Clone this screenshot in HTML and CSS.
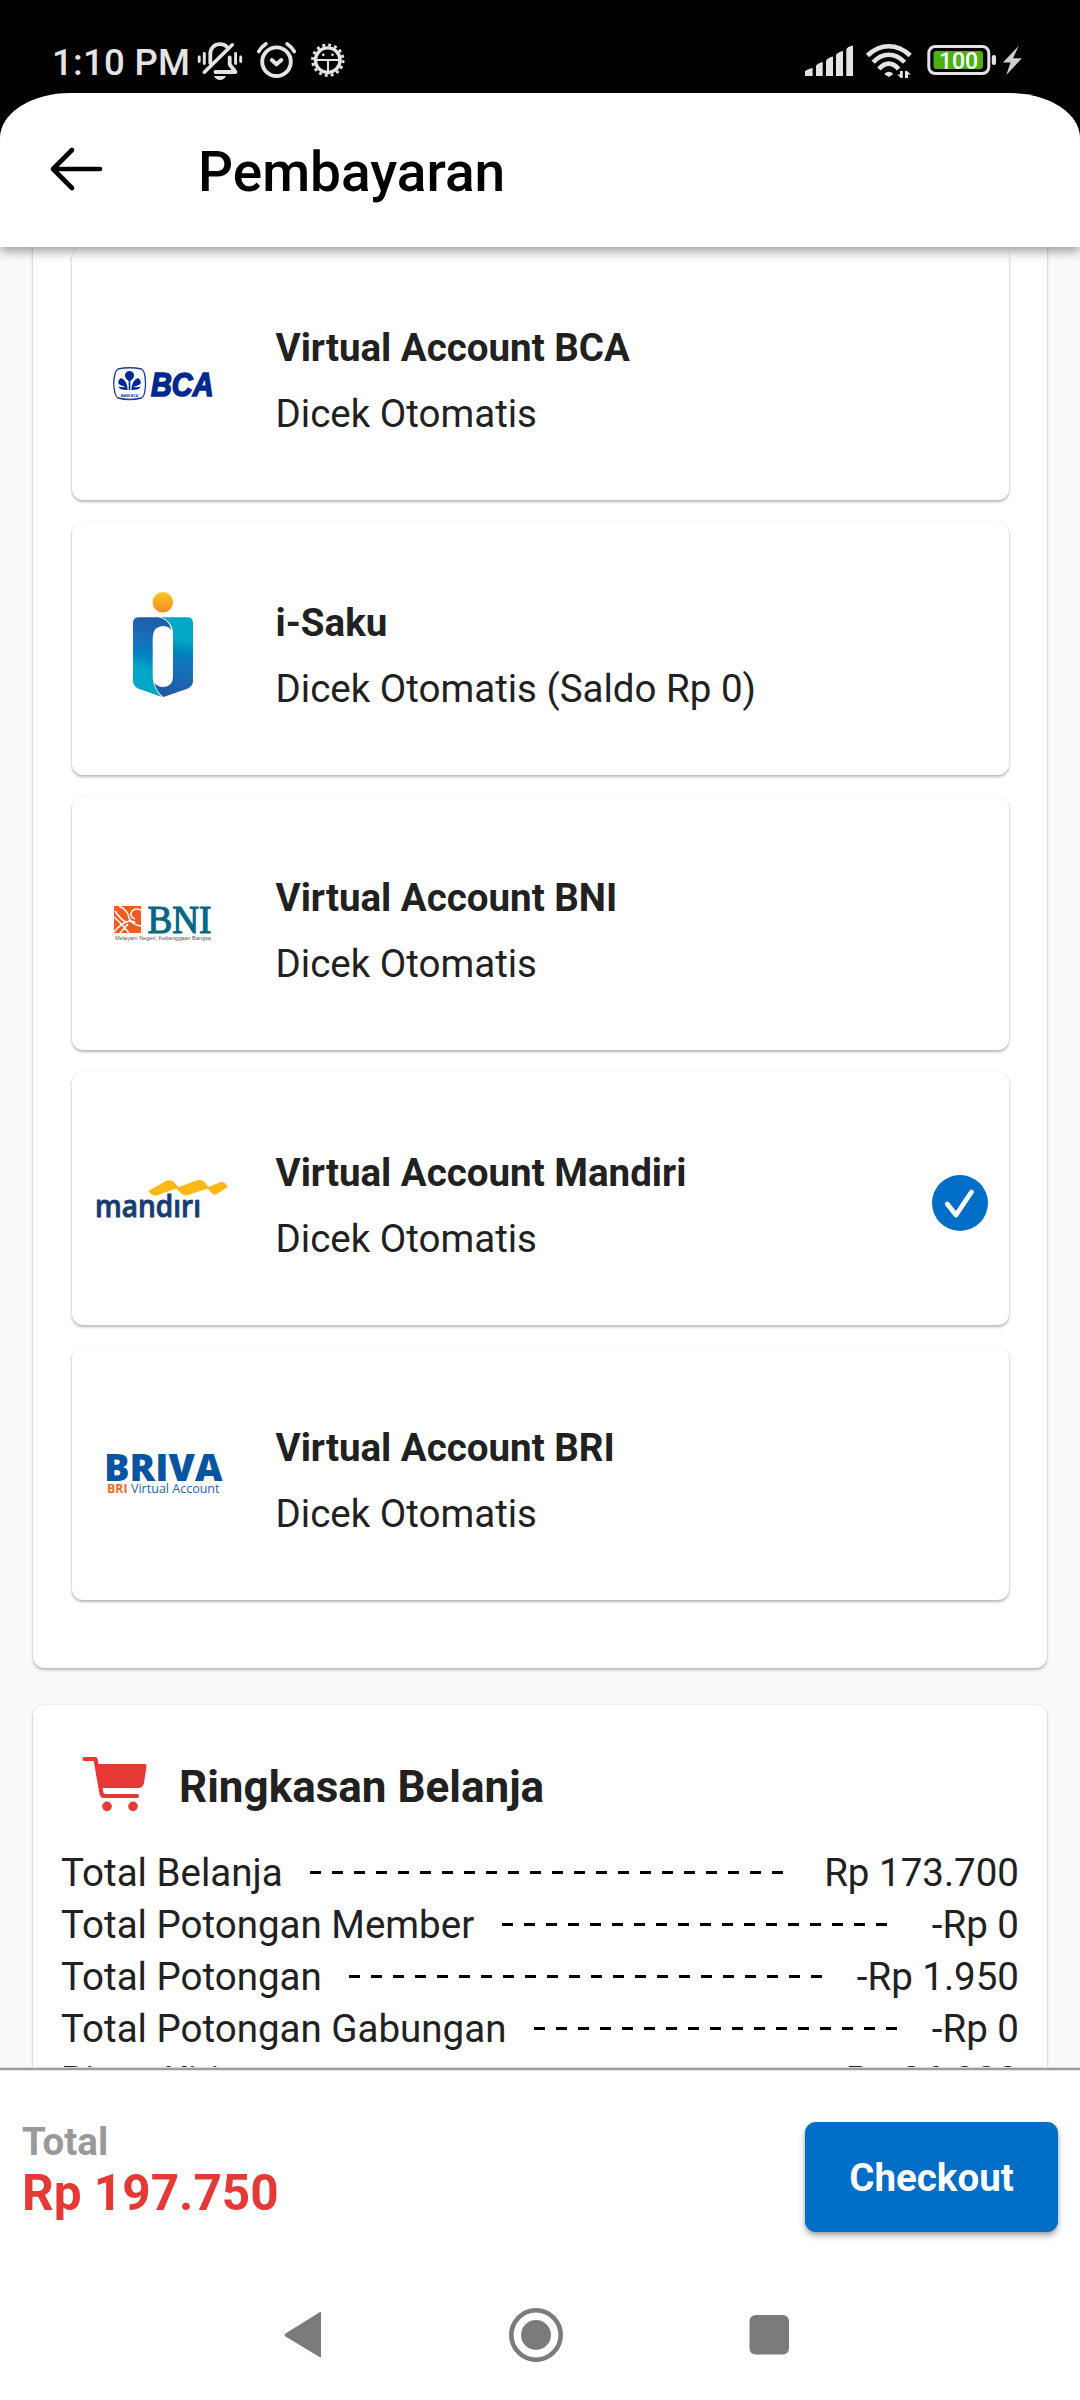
FILE: index.html
```html
<!DOCTYPE html>
<html lang="id">
<head>
<meta charset="utf-8">
<title>Pembayaran</title>
<link rel="stylesheet" href="styles.css">
</head>
<body>
<div class="status">
  <span class="time">1:10 PM</span>
  <svg class="status-left" viewBox="190 30 160 63" fill="none" stroke="#e4e4e4" stroke-linecap="round" stroke-linejoin="round">
    <g stroke-width="2.9">
      <path d="M199.2 57v4.5M204.3 53.5v10M235.6 53.5v10M240.7 57v4.5"/>
    </g>
    <path stroke-width="3.8" d="M210.3 63V54C210.3 48 214.5 44.2 220 44.2Q224.500 44.200 226.500 46.500M229.700 57.500V64.500L235.500 72H215.500"/>
    <path stroke-width="3.6" d="M232.300 44.800L204.300 72.200"/>
    <path fill="#e4e4e4" stroke="none" d="M214 76H226Q224 80 220 80Q216 80 214 76Z"/>
    <circle cx="276.500" cy="61.700" r="14.300" stroke-width="3.900"/>
    <path stroke-width="4" d="M271.800 60L276.500 64.300L281.300 60"/>
    <path stroke-width="3.600" d="M258.700 51.500Q261.500 47 266 43.800M287 43.800Q291.500 47 294.300 51.500"/>
    <circle cx="327.800" cy="60.200" r="12.300" stroke-width="3.400"/>
    <circle cx="327.800" cy="60.200" r="15.200" stroke-width="3" stroke-linecap="butt" stroke-dasharray="2.900 3.070"/>
    <path stroke-width="2" d="M316 60H340M328 60V73"/>
    <path stroke-width="2.500" d="M323.200 54.800h.1M332.400 54.800h.1"/>
  </svg>
  <svg class="status-right" viewBox="800 30 230 63" fill="#e4e4e4">
    <path d="M805 76V71.500Q806 69.500 812.600 68V76ZM816 76V66Q817 63.500 822.700 62V76ZM826 76V61Q827 58 833 56.500V76ZM836 76V55Q837 52.500 843 51V76ZM846.300 76V49.500Q847 46.500 853 45.500V76Z"/>
    <g fill="none" stroke="#e4e4e4" stroke-width="4.600">
      <path d="M867.500 55.500Q877 46.200 888.800 46.200T910.200 55.500"/>
      <path d="M873.200 62.300Q880 54.700 888.800 54.700T904.600 62.300"/>
      <path d="M879 69Q883.500 63.600 888.800 63.600T898.600 69"/>
    </g>
    <path d="M884.200 74Q888.800 69.500 893.400 74L888.800 77Z"/>
    <path d="M900 71H902.800V78H901L897.300 74.500H900ZM905 71H907L910.800 74.500H908V78H905Z"/>
    <rect x="928.800" y="46.500" width="60" height="27" rx="6.500" fill="none" stroke="#e4e4e4" stroke-width="3"/>
    <rect x="933.500" y="51" width="49.500" height="18" rx="3" fill="#4caf13"/>
    <rect x="991.800" y="55" width="4.200" height="10" rx="2"/>
    <path fill="#cfcfcf" d="M1018.700 46L1013 58.300H1021.900L1006.300 75L1010.500 62.500H1002.800Z"/>
    <text class="battery" x="939" y="69" textLength="39">100</text>
  </svg>
</div>
<header class="bar-wrap">
  <div class="appbar">
    <svg class="back" viewBox="0 0 56 50"><path d="M51 25H4M23 6L4 25L23 44"/></svg>
    <h1>Pembayaran</h1>
  </div>
</header>
<main>
  <section class="panel methods">
    <article class="method">
      <svg class="logo" viewBox="72 247 203 253">
        <path d="M118 369Q129.500 366.500 141.500 369Q144 371 144.500 374Q146.500 383.500 144.500 393Q144 396.500 141.500 398Q129.500 401 118 398Q115.500 396.500 115 393Q112.500 383.500 115 374Q115.500 371 118 369Z" fill="none" stroke="#1c3c9c" stroke-width="1.300"/>
        <g fill="#00298f">
          <path d="M128.700 390V381Q124.500 378 125 374.500Q126 371 129.500 371T134 374.500Q134.500 378 130.300 381V390Z"/>
          <path d="M127.700 390Q127 380 121 378Q117.500 380 118.500 384Q121.500 386 126 387Q121 387.500 118.500 386.500Q119 390 127.700 390ZM131.300 390Q132 380 138 378Q141.500 380 140.500 384Q137.500 386 133 387Q138 387.500 140.500 386.500Q140 390 131.300 390Z"/>
        </g>
        <text class="bca-tiny" x="121" y="397" textLength="17" lengthAdjust="spacingAndGlyphs">BANK BCA</text>
        <text class="bca" x="151" y="395.500" textLength="62.500" lengthAdjust="spacingAndGlyphs">BCA</text>
      </svg>
      <div class="info"><h2>Virtual Account BCA</h2><p>Dicek Otomatis</p></div>
    </article>
    <article class="method">
      <svg class="logo" viewBox="72 522 203 253">
        <defs>
          <linearGradient id="sun" x2="0" y2="1"><stop stop-color="#fdc623"/><stop offset="1" stop-color="#f68b1f"/></linearGradient>
          <linearGradient id="left" gradientUnits="userSpaceOnUse" x1="170" y1="618" x2="152" y2="694"><stop stop-color="#2059a6"/><stop offset=".4" stop-color="#1674bd"/><stop offset=".53" stop-color="#0080bf"/><stop offset=".7" stop-color="#00a7c6"/></linearGradient>
          <linearGradient id="right" gradientUnits="userSpaceOnUse" x1="183" y1="618" x2="168" y2="694"><stop offset=".28" stop-color="#00a7c6"/><stop offset=".45" stop-color="#0080bf"/><stop offset=".6" stop-color="#1674bd"/><stop offset="1" stop-color="#2059a6"/></linearGradient>
        </defs>
        <circle cx="162.800" cy="602.300" r="10.200" fill="url(#sun)"/>
        <path fill="url(#left)" d="M139 617.300H158Q169 619 171.500 630Q168 626 163 626Q153 626.500 152.700 637V678Q154 690 161.800 697L138 688.500Q133 686 133 681V623Q133 617.300 139 617.300Z"/>
        <path fill="url(#right)" d="M160.500 617.300H187Q193 617.300 193 623V681Q193 686 188 688.500L163.500 697Q156 691 154.500 683Q158 687 163 687Q172.800 686.500 173 677V631Q171 620 160.500 617.300Z"/>
      </svg>
      <div class="info"><h2>i-Saku</h2><p>Dicek Otomatis (Saldo Rp 0)</p></div>
    </article>
    <article class="method">
      <svg class="logo" viewBox="72 797 203 253">
        <rect x="114" y="906" width="27" height="27" fill="#f15a23"/>
        <svg x="114" y="906" width="27" height="27" viewBox="0 0 27 27">
          <path d="M0 11Q6 16 15 27M0 26Q7 17 15 15Q20 15 21 17M5 0Q14 4 15 12Q18 19 27 20M27 4Q20 1 17 7Q16 11 21 13M1 5Q7 14 12 16M14 18L6 27" fill="none" stroke="#fff" stroke-width="1.600"/>
        </svg>
        <text class="bni" x="147.500" y="932.700" textLength="64" lengthAdjust="spacingAndGlyphs">BNI</text>
        <text class="bni-tiny" x="115" y="940" textLength="96" lengthAdjust="spacingAndGlyphs">Melayani Negeri, Kebanggaan Bangsa</text>
      </svg>
      <div class="info"><h2>Virtual Account BNI</h2><p>Dicek Otomatis</p></div>
    </article>
    <article class="method">
      <svg class="logo" viewBox="72 1072 203 253">
        <text class="mandiri" x="95" y="1217.300" textLength="106" lengthAdjust="spacingAndGlyphs">mandiri</text>
        <path fill="#fff" d="M175 1188H202V1199.500H175Z"/>
        <path fill="#fdb813" d="M148.300 1191L166 1181Q171 1179 174 1182L178 1186.700H180L195 1181Q202 1178.500 205 1182.500L208.500 1187L221 1182Q225 1181.500 227.700 1187L216 1194.500Q213.500 1195.500 211.500 1193L207.500 1188.500L187 1195.300Q184 1196 182 1194L176 1188.500L158 1195Q153 1196.500 150.500 1193.500Z"/>
      </svg>
      <div class="info"><h2>Virtual Account Mandiri</h2><p>Dicek Otomatis</p></div>
      <svg class="check" viewBox="-28 -28 56 56"><circle r="28"/><path d="M-12.700 1L-4 12L11.500-11"/></svg>
    </article>
    <article class="method">
      <svg class="logo" viewBox="72 1347 203 253">
        <text class="briva" x="104" y="1480.500" textLength="118.500" lengthAdjust="spacingAndGlyphs">BRIVA</text>
        <text class="bri" x="107" y="1492.700" textLength="20.500" lengthAdjust="spacingAndGlyphs">BRI</text>
        <text class="bri-va" x="131" y="1492.700" textLength="88.500" lengthAdjust="spacingAndGlyphs">Virtual Account</text>
      </svg>
      <div class="info"><h2>Virtual Account BRI</h2><p>Dicek Otomatis</p></div>
    </article>
  </section>
  <section class="panel summary">
    <div class="summary-head">
      <svg class="cart" viewBox="82 1756 66 56">
        <path d="M84.500 1759H95.500L101.500 1793.500Q102 1796 105 1796H137" fill="none" stroke="#e53935" stroke-width="4.200" stroke-linecap="round" stroke-linejoin="round"/>
        <path d="M97 1764H144.500Q147 1764 146.500 1766.500L144 1783Q143 1788 138 1788H101.500Z"/>
        <circle cx="107" cy="1806.300" r="4.800"/><circle cx="133" cy="1806.300" r="4.800"/>
      </svg>
      <h2>Ringkasan Belanja</h2>
    </div>
    <div class="row"><span>Total Belanja</span><i class="dash" style="--n:22"></i><span>Rp 173.700</span></div>
    <div class="row"><span>Total Potongan Member</span><i class="dash" style="--n:18"></i><span>-Rp 0</span></div>
    <div class="row"><span>Total Potongan</span><i class="dash" style="--n:22"></i><span>-Rp 1.950</span></div>
    <div class="row"><span>Total Potongan Gabungan</span><i class="dash" style="--n:17"></i><span>-Rp 0</span></div>
    <div class="row"><span>Biaya Kirim</span><i class="dash" style="--n:22"></i><span>Rp 26.000</span></div>
  </section>
</main>
<footer class="checkout-bar">
  <div class="total"><span class="total-label">Total</span><strong>Rp 197.750</strong></div>
  <button class="checkout">Checkout</button>
</footer>
<nav class="sysnav">
  <svg viewBox="280 2300 520 70" fill="#7b7b7b">
    <path d="M320 2312Q321 2311.500 321 2313V2356.500Q321 2358 319.500 2357L285.500 2336.500Q283.500 2335 285.500 2333.500Z"/>
    <circle cx="536" cy="2335" r="24.700" fill="none" stroke="#7b7b7b" stroke-width="4.600"/>
    <circle cx="536" cy="2335" r="15"/>
    <rect x="749.500" y="2315" width="39.500" height="39.500" rx="6"/>
  </svg>
</nav>
</body>
</html>
```
FILE: styles.css
```css
* { box-sizing: border-box; }
body {
  margin: 0;
  width: 1080px;
  height: 2400px;
  overflow: hidden;
  display: flex;
  flex-direction: column;
  background: #fff;
  color: #212121;
  font: 400 38.5px/1.2 Roboto, sans-serif;
}
h1, h2, p { margin: 0; }
.status {
  flex: none;
  height: 93px;
  padding: 30px 50px 0 52px;
  display: flex;
  background: #000;
  color: #e4e4e4;
}
.time {
  width: 138px;
  padding-top: 1px;
  font-size: 36.5px;
  font-weight: 500;
  line-height: 63px;
  letter-spacing: .3px;
  white-space: nowrap;
}
.status-left { width: 160px; height: 63px; }
.status-right { width: 230px; height: 63px; margin-left: auto; }
.battery { font: 500 23px Roboto, sans-serif; fill: #fff; }
.bar-wrap { flex: none; background: linear-gradient(#000 50%, #fafafa 50%); z-index: 2; }
.appbar {
  height: 154px;
  display: flex;
  align-items: center;
  padding-left: 49px;
  background: #fff;
  border-radius: 70px 70px 0 0 / 45px 45px 0 0;
  box-shadow: 0 4px 12px rgba(0, 0, 0, .4);
}
.back {
  width: 56px;
  height: 50px;
  margin-bottom: 2px;
  fill: none;
  stroke: #000;
  stroke-width: 4.6;
  stroke-linecap: round;
  stroke-linejoin: round;
}
.appbar h1 { margin-left: 93px; padding-top: 3px; font-size: 55px; font-weight: 500; color: #000; }
main {
  flex: none;
  height: 1821px;
  overflow: hidden;
  padding: 0 33px;
  background: #fafafa;
}
.panel {
  background: #fff;
  border-radius: 11px;
  box-shadow: 0 2px 3px rgba(0, 0, 0, .26), 0 0 2px rgba(0, 0, 0, .12);
}
.methods {
  padding: 0 38.5px 68px;
  border-radius: 0 0 11px 11px;
  display: flex;
  flex-direction: column;
  gap: 22px;
}
.method {
  height: 253px;
  display: flex;
  background: #fff;
  border-radius: 11px;
  box-shadow: 0 2px 3px rgba(0, 0, 0, .28), 0 0 2px rgba(0, 0, 0, .08);
}
.logo { width: 203px; height: 253px; flex: none; }
.info { flex: 1; padding: 68px 0 0 1px; line-height: 66px; }
.info h2 { font-size: 38.5px; font-weight: 700; line-height: 66px; }
.check { width: 56px; height: 56px; margin: 103px 21px 0 0; fill: #006dc7; }
.check path { fill: none; stroke: #fff; stroke-width: 4.8; stroke-linecap: round; stroke-linejoin: round; }
.bca { font: italic 700 33px "Liberation Sans", sans-serif; fill: #00298f; stroke: #00298f; stroke-width: 1.6; }
.bca-tiny { font: 700 4px "Liberation Sans", sans-serif; fill: #00298f; }
.bni { font: 400 40.5px "Liberation Serif", serif; fill: #006885; stroke: #006885; stroke-width: 1.2; }
.bni-tiny { font: 5.5px "Liberation Sans", sans-serif; fill: #555; }
.mandiri { font: 600 31.5px "Open Sans", sans-serif; fill: #1a3b72; stroke: #1a3b72; stroke-width: .9; }
.briva { font: 800 36.8px "Open Sans", sans-serif; fill: #0754a0; }
.bri { font: 700 13.2px "Open Sans", sans-serif; fill: #ec6b25; }
.bri-va { font: 400 13.2px "Open Sans", sans-serif; fill: #1c65a9; }
.summary { margin-top: 37px; height: 500px; padding: 51px 28px 0; }
.summary-head { display: flex; height: 91px; padding-left: 21px; }
.cart { width: 66px; height: 56px; fill: #e53935; }
.summary-head h2 { margin-left: 31px; padding-top: 5px; font-size: 44px; font-weight: 700; }
.row { display: flex; align-items: center; height: 52px; line-height: 52px; }
.dash {
  margin: 0 0 1px 27.5px;
  width: calc(var(--n) * 22px);
  height: 3px;
  background: repeating-linear-gradient(90deg, #000 0 11px, transparent 11px 22px);
}
.row span:last-child { margin-left: auto; }
.checkout-bar {
  flex: none;
  height: 202px;
  padding: 52px 22px 0;
  display: flex;
  justify-content: space-between;
  border-top: 2px solid #9c9c9c;
  box-shadow: 0 -1px #dcdcdc, inset 0 1px #e8e8e8;
  background: #fff;
  z-index: 1;
}
.total { display: flex; flex-direction: column; }
.total-label { color: #999; font-weight: 700; line-height: 39px; }
.total strong { color: #e53935; font-size: 49.5px; line-height: 64px; font-weight: 700; }
.checkout {
  width: 253px;
  height: 110px;
  border: 0;
  padding: 0;
  border-radius: 11px;
  background: #006dc7;
  color: #fff;
  font: 700 38.5px Roboto, sans-serif;
  box-shadow: 0 4px 6px rgba(0, 0, 0, .3), 0 1px 3px rgba(0, 0, 0, .15);
}
.sysnav { flex: 1; padding: 30px 0 0 280px; }
.sysnav svg { display: block; width: 520px; height: 70px; }
```
